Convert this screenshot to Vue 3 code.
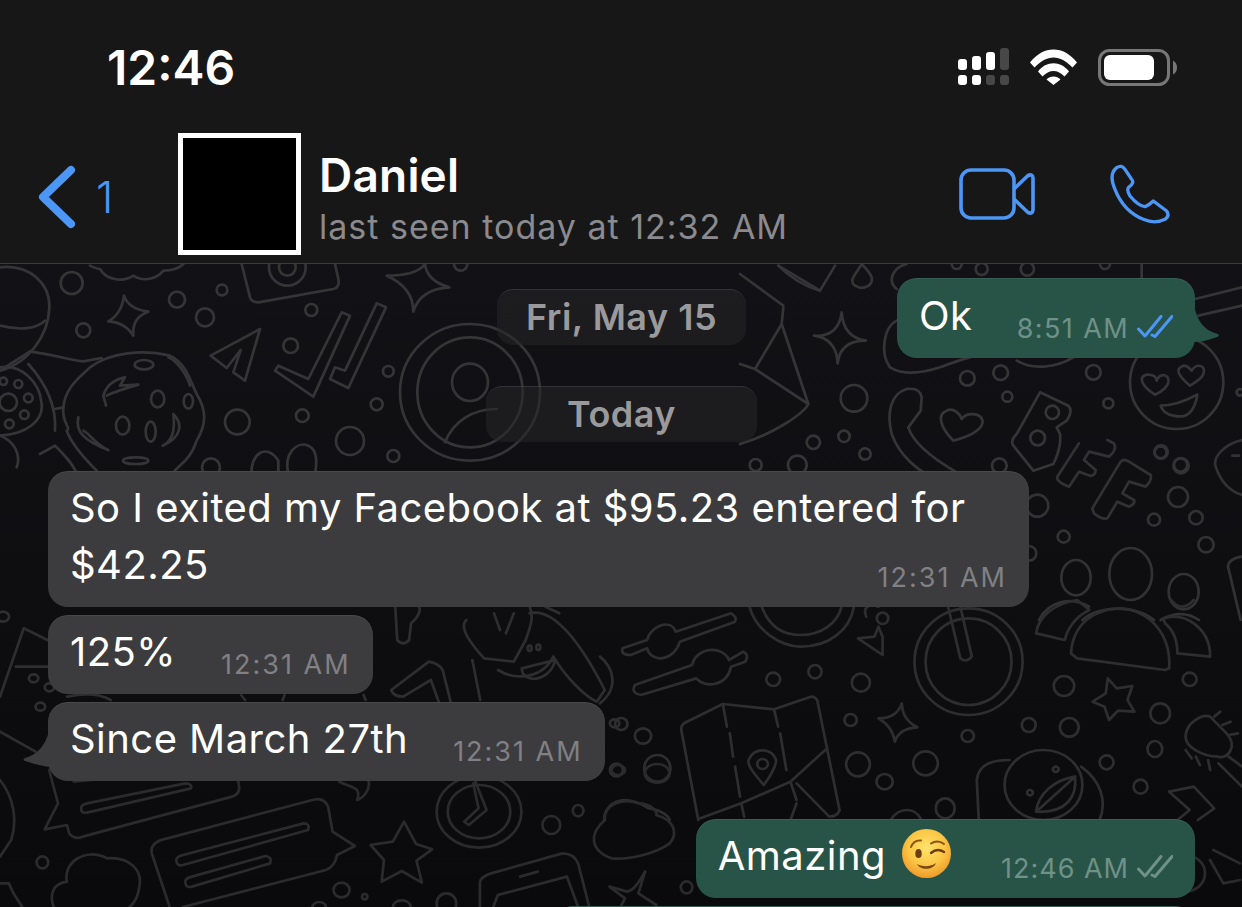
<template>
  <div class="phone">
    <header class="top">
      <div class="status">
        <span class="clock">12:46</span>
        <div class="status-icons">
          <svg class="signal" width="51" height="37" viewBox="0 0 51 37">
            <rect v-for="b in signalBars" :key="b.x + '-' + b.y" :x="b.x" :y="b.y" width="9" :height="b.h" rx="3" :fill="b.on ? '#fff' : '#474747'" />
          </svg>
          <svg class="wifi" width="47" height="36" viewBox="0 0 47 36" fill="#fff">
            <path d="M0 13.5C13-4 34-4 47 13.5L42.5 18.5C30 5 17 5 4.5 18.5Z" />
            <path d="M8 22.5C16 11.5 31 11.5 39 22.5L34.5 27.5C28 20 19 20 12.5 27.5Z" />
            <path d="M16.5 30.5C20 26.5 27 26.5 30.5 30.5L23.5 36Z" />
          </svg>
          <svg class="battery" width="79" height="37" viewBox="0 0 79 37">
            <rect x="1.5" y="1.5" width="69" height="34" rx="10" fill="none" stroke="#777" stroke-width="3" />
            <rect x="6" y="6" width="50" height="25" rx="6" fill="#fff" />
            <path d="M75 11.5C78 13 79 16 79 18.5C79 21 78 24 75 25.5Z" fill="#777" />
          </svg>
        </div>
      </div>
      <nav class="nav">
        <svg class="chevron" width="38" height="64" viewBox="0 0 38 64">
          <path d="M33 5L5 32L33 59" fill="none" stroke="#4c97f6" stroke-width="8" stroke-linecap="round" stroke-linejoin="round" />
        </svg>
        <span class="back-count">1</span>
        <div class="avatar"></div>
        <div class="who">
          <div class="name">Daniel</div>
          <div class="seen">last seen today at 12:32 AM</div>
        </div>
        <svg class="video" width="76" height="52" viewBox="0 0 76 52" fill="none" stroke="#4c97f6" stroke-width="3.6" stroke-linejoin="round">
          <rect x="2" y="2" width="53" height="48" rx="10" />
          <path d="M55 21L69 7.5Q73.5 5.5 74 10V42Q73.5 46.5 69 44.5L55 31" />
        </svg>
        <svg class="call" width="60" height="60" viewBox="570 435 180 178" fill="none" stroke="#4c97f6" stroke-width="10" stroke-linejoin="round">
          <path d="M590 445Q605 435 615 450L635 480Q645 490 625 505Q620 515 630 530Q655 560 675 562Q690 555 700 545L740 575Q750 590 735 600Q705 615 670 600Q610 575 585 510Q565 465 590 445Z" />
        </svg>
      </nav>
    </header>

    <main class="chat">
      <svg class="wall" width="1242" height="643" viewBox="0 264 1242 643" fill="none" stroke-linecap="round" stroke-linejoin="round">
        <g v-for="g in doodles" :key="g.id" :transform="`translate(${g.x} ${g.y}) scale(${1 / g.sx} ${1 / g.sy})`" :stroke="g.stroke">
          <path v-for="(d, i) in g.paths" :key="i" :d="d" vector-effect="non-scaling-stroke" stroke-width="2.7" />
          <ellipse v-for="(c, i) in g.rings" :key="'r' + i" :cx="c[0]" :cy="c[1]" :rx="c[2]" :ry="c[3] || c[2]" vector-effect="non-scaling-stroke" stroke-width="2.7" />
        </g>
      </svg>

      <div class="first-row">
        <div class="pill fri">Fri, May 15</div>
        <div class="bubble out ok">
          <span class="text">Ok</span>
          <span class="meta">
            <span class="time">8:51 AM</span>
            <svg class="ticks" width="36" height="24" viewBox="0 0 36 24" fill="none" stroke="#4c97f6" stroke-width="3" stroke-linecap="round" stroke-linejoin="round">
              <path d="M1.5 14L8 21L24 1.5" /><path d="M15 20L18 21.5L35 1.5" />
            </svg>
          </span>
          <svg class="tail tail-r" width="28" height="56" viewBox="0 0 28 56">
            <path d="M0 0C4 24 12 30 25 34Q27 36 24 37C16 40 8 42 0 42Z" fill="#285448" />
          </svg>
        </div>
      </div>

      <div class="pill today">Today</div>

      <div class="bubble in wide">
        <div class="text">So I exited my Facebook at $95.23 entered for</div>
        <div class="last-line">
          <span class="text">$42.25</span>
          <span class="meta"><span class="time">12:31 AM</span></span>
        </div>
      </div>
      <div class="bubble in">
        <span class="text">125%</span>
        <span class="meta"><span class="time">12:31 AM</span></span>
      </div>
      <div class="bubble in since">
        <span class="text">Since March 27th</span>
        <span class="meta"><span class="time">12:31 AM</span></span>
        <svg class="tail tail-l" width="28" height="50" viewBox="0 0 28 50">
          <path d="M28 0C24 20 14 28 3 31Q0 33 3 34C12 37 20 39 28 40Z" fill="#3c3c3e" />
        </svg>
      </div>

      <div class="bubble out amazing">
        <span class="text">Amazing</span>
        <svg class="wink" width="49" height="49" viewBox="0 0 49 49">
          <defs>
            <radialGradient id="face" cx="50%" cy="38%" r="62%">
              <stop offset="0" stop-color="#ffe46b" />
              <stop offset=".6" stop-color="#fbc544" />
              <stop offset="1" stop-color="#ef9a2a" />
            </radialGradient>
          </defs>
          <circle cx="24.5" cy="24.5" r="24.5" fill="url(#face)" />
          <ellipse cx="16.5" cy="24.5" rx="3.2" ry="4.6" fill="#6b3d10" />
          <path d="M9 18C11 13 15 11 19 11.5" fill="none" stroke="#8a5414" stroke-width="2" stroke-linecap="round" />
          <path d="M29 14.5C33 12 38 12 42 15" fill="none" stroke="#8a5414" stroke-width="2" stroke-linecap="round" />
          <path d="M29 24C33 20.5 38 20.5 42 23" fill="none" stroke="#6b3d10" stroke-width="2.4" stroke-linecap="round" />
          <path d="M15 35C20 38 29 38 34 34C32 41 18 42 15 35Z" fill="#7b4612" />
        </svg>
        <span class="meta">
          <span class="time">12:46 AM</span>
          <svg class="ticks" width="36" height="24" viewBox="0 0 36 24" fill="none" stroke="#6f9187" stroke-width="3" stroke-linecap="round" stroke-linejoin="round">
            <path d="M1.5 14L8 21L24 1.5" /><path d="M15 20L18 21.5L35 1.5" />
          </svg>
        </span>
      </div>
      <div class="bubble out next"></div>
    </main>
  </div>
</template>

<script setup>
const signalBars = [
  { x: 0, y: 11, h: 11, on: true }, { x: 14, y: 8, h: 14, on: true },
  { x: 28, y: 4, h: 18, on: true }, { x: 42, y: 0, h: 22, on: false },
  { x: 0, y: 27, h: 10, on: true }, { x: 14, y: 27, h: 10, on: true },
  { x: 28, y: 27, h: 10, on: false }, { x: 42, y: 27, h: 10, on: false },
]

// doodle wallpaper, each group traced in its own crop coordinates
const doodles = [
  {
    id: 'topleft', x: 0, y: 264, sx: 3, sy: 3, stroke: '#353537',
    rings: [[215, 57, 33], [531, 107, 24], [666, 78, 16], [250, 199, 21], [615, 160, 27], [934, 138, 18], [872, 245, 22], [1165, 322, 16], [1130, 421, 18], [907, 455, 19], [712, 474, 37], [1050, 531, 42], [1180, 576, 18], [1382, 0, 20], [633, 610, 27], [862, 10, 55], [862, 10, 25], [25, 415, 26], [10, 352, 11], [55, 360, 12], [85, 402, 13], [73, 452, 13], [28, 480, 13], [1410, 385, 210, 205], [1410, 385, 158, 165], [1410, 355, 54, 56], [432, 302, 28, 14], [473, 405, 20, 25], [565, 412, 14, 22], [368, 485, 20, 27], [452, 503, 15, 30], [407, 590, 38, 10]],
    paths: [
      'M0 10C90 0 150 60 148 130C145 220 80 300 0 320', 'M0 185C60 200 110 195 135 170',
      'M270 5C290 15 300 15 300 15C320 50 370 55 400 35C430 55 470 45 490 20C520 20 540 10 550 0',
      'M725 0L750 100Q755 115 775 115L1000 75Q1020 70 1015 45L1005 0',
      'M372 95Q385 135 445 143Q395 160 400 215Q375 175 325 172Q365 150 372 95Z',
      'M1160 35Q1250 35 1275 0Q1280 50 1348 70Q1260 75 1240 143Q1240 70 1160 35Z',
      'M780 195L632 275L680 312L722 258L700 325L735 350Z',
      'M825 320L940 398L1050 155L1025 145L925 345L835 305Z', 'M990 345L1045 372L1158 130L1130 118L1035 320L1005 310Z',
      'M190 430C195 370 240 340 270 310C330 265 430 255 510 275C560 300 570 350 590 390C620 440 620 480 590 530C570 590 540 600 520 625',
      'M190 430C185 480 215 490 200 500C215 540 250 580 290 620', 'M90 262C150 270 220 290 250 292L305 282', 'M90 262L0 320',
      'M85 300C130 350 170 420 165 500', 'M165 435L190 430', 'M120 570L165 545C190 570 220 600 230 630',
      'M318 425L310 395C320 360 350 345 375 340L360 365L415 362C370 375 340 385 320 395', 'M235 460C225 500 250 530 325 558C290 545 270 510 250 500',
      'M520 450C550 480 545 520 488 545C520 530 525 490 520 450', 'M505 280C530 290 560 330 570 365',
      'M1335 535C1360 470 1420 435 1490 435', 'M0 310C60 300 120 350 125 420C130 470 80 510 0 515', 'M0 515C40 530 65 570 50 610',
      'M755 630C750 570 800 535 835 590V630', 'M865 630C850 570 890 530 925 545C955 560 950 600 945 630',
    ],
  },
  {
    id: 'topright', x: 740, y: 264, sx: 3, sy: 3, stroke: '#353537',
    rings: [[342, 403, 40], [220, 535, 20], [312, 517, 17], [375, 570, 17], [47, 603, 18], [172, 603, 28], [682, 343, 22], [782, 326, 22], [802, 398, 15], [1060, 325, 22], [1105, 418, 15], [1262, 565, 18], [1322, 603, 20], [778, 605, 22], [725, 15, 18], [862, 15, 20], [650, 0, 15], [1095, 0, 15], [1310, 355, 140], [937, 445, 20], [893, 522, 22], [1500, 385, 10]],
    paths: [
      'M0 300L45 315L205 420C190 450 100 510 0 540', 'M130 130L125 180L205 420', 'M125 180L45 315', 'M0 30L130 125',
      'M115 5L240 80L285 5', 'M115 5Q170 60 240 80',
      'M365 0C345 35 325 50 345 65C370 80 400 65 395 40C390 25 375 10 365 0Z',
      'M305 145Q310 220 378 230Q300 230 293 298Q290 225 222 215Q295 220 305 145Z',
      'M470 170C430 190 420 270 450 310C500 340 570 320 600 310C640 295 670 285 690 280', 'M830 290C880 320 950 310 1000 280',
      'M500 375C450 390 440 450 455 510C480 580 540 620 560 630', 'M500 375Q540 370 545 400L542 440L505 490C520 540 590 590 650 625',
      'M640 530C600 490 590 450 620 440C640 430 660 450 665 465C680 445 720 445 728 470C730 500 680 520 640 530Z',
      'M900 385L985 425Q1000 440 980 470L950 490L960 510Q965 550 940 600L880 620L820 545Q810 530 830 510Z',
      'M1245 392C1210 370 1190 340 1220 332C1240 330 1250 340 1250 350C1260 325 1290 330 1285 355C1280 375 1260 385 1245 392Z',
      'M1350 365C1320 340 1300 315 1330 305C1345 305 1350 315 1355 320C1370 295 1400 305 1390 330C1385 345 1365 355 1350 365Z',
      'M1262 425Q1310 425 1372 392Q1360 470 1300 455Q1270 450 1262 425Z',
      'M1365 105L1506 70', 'M1375 155L1506 125', 'M1205 0V45', 'M500 0C460 10 440 50 470 75',
    ],
  },
  {
    id: 'rightmid', x: 1029, y: 440, sx: 3, sy: 3, stroke: '#323234',
    rings: [[396, 36, 20], [456, 77, 23], [447, 171, 30], [375, 239, 18], [501, 233, 20], [531, 314, 23], [104, 290, 18], [25, 197, 33], [0, 340, 22], [141, 413, 44, 53], [305, 402, 64, 78], [464, 455, 45, 53]],
    paths: [
      'M85 110L150 10', 'M85 110Q80 125 120 140L150 95L185 108Q200 105 200 90L165 60L180 35L240 50Q265 30 255 10L235 0',
      'M190 205L275 65Q285 55 300 65L365 105Q370 120 350 140L300 125L280 160L315 180Q320 190 300 200L265 185L235 235Q220 240 195 220Z',
      'M30 540C60 480 130 470 180 500', 'M160 540C210 495 320 495 375 540', 'M395 540C440 515 480 520 510 540',
      'M639 350Q600 355 597 380L635 540', 'M639 0C590 10 550 50 560 80C570 110 590 150 639 165', 'M610 47L630 47',
    ],
  },
  {
    id: 'midleft', x: 0, y: 600, sx: 2.53, sy: 3, stroke: '#2e2e30',
    rings: [[85, 235, 12], [125, 262, 12], [102, 320, 12], [8, 50, 15], [1340, 145, 5, 8], [1362, 142, 5, 8], [1555, 370, 12]],
    paths: [
      'M60 85L0 290', 'M60 85L120 120', 'M40 200L125 200', 'M0 395L90 455',
      'M1000 20L1005 120Q1020 140 1035 120L1040 70C1060 50 1065 30 1060 20',
      'M1180 60C1160 80 1190 130 1225 175L1300 185L1330 120C1345 70 1350 50 1340 20',
      'M1340 40C1400 20 1470 130 1530 270L1510 305C1480 290 1430 230 1400 170', 'M1400 170C1370 240 1300 240 1260 210',
      'M1320 205L1405 180C1390 250 1320 250 1320 205Z', 'M1250 40L1265 90', 'M1300 40L1280 100', 'M1380 20L1415 40',
      'M1195 180L1215 300', 'M990 270L1085 185Q1110 190 1120 210L1140 305', 'M1020 290L1090 240L1110 305', 'M990 270Q995 290 1020 290',
      'M170 290C210 280 250 280 280 300', 'M610 285L620 300', 'M720 285L715 300', 'M920 285L925 300',
    ],
  },
  {
    id: 'midright', x: 600, y: 600, sx: 2.442, sy: 3, stroke: '#2e2e30',
    rings: [[423, 238, 17, 20], [525, 215, 16, 20], [637, 248, 22, 27], [1133, 258, 25, 30], [1440, 238, 17, 20], [1368, 340, 24, 30], [1047, 375, 17, 21], [1146, 382, 23, 28], [898, 408, 15, 18], [612, 360, 15, 18], [52, 372, 15, 18], [105, 408, 20, 23], [40, 510, 16, 19], [140, 505, 32, 40], [630, 493, 29, 36], [795, 490, 30, 36], [695, 545, 20, 23], [1355, 447, 18, 24], [1237, 487, 17, 21], [1320, 560, 17, 21], [843, 625, 23, 30], [690, 55, 14, 17], [900, 185, 132, 160], [900, 185, 105, 130], [397, 492, 13, 15], [1083, 555, 95, 105], [1113, 508, 7, 8], [1050, 578, 7, 8]],
    paths: [
      'M365 20C380 90 440 140 490 140C560 140 610 90 620 20', 'M395 20C410 70 440 105 490 105C540 105 580 70 590 20',
      'M55 145L115 120C120 85 170 50 185 95L320 40Q335 50 330 65L195 125C180 185 125 190 115 145L75 165Q50 165 55 145Z',
      'M85 255L225 195C235 140 300 135 315 180L350 155Q365 165 355 185L320 200C310 260 255 265 235 235L100 285Q75 280 85 255Z',
      'M850 20L880 175Q895 190 908 170L880 20', 'M680 80L670 110L630 115L690 165L690 110Z', 'M650 50C640 20 660 10 680 20',
      'M1150 160C1155 70 1210 25 1270 25C1340 30 1395 100 1390 205L1380 210L1165 175Z',
      'M1065 100C1070 50 1110 10 1165 0L1195 30C1160 50 1140 90 1135 120Z', 'M1375 55C1430 35 1490 85 1490 170L1410 160C1410 120 1400 90 1380 70Z',
      'M1395 0Q1420 40 1450 0',
      'M1240 235L1262 265L1300 258L1288 300L1305 335L1265 332L1243 360L1232 320L1203 305L1235 280Z',
      'M737 310Q738 360 775 382Q730 385 720 425Q715 380 680 355Q725 355 737 310Z',
      'M205 370L300 312L425 328L515 290Q530 290 532 310L585 630Q580 650 560 650L480 550', 'M205 370Q195 380 200 400L240 660',
      'M245 655L345 610L465 545L550 450', 'M300 312L310 380', 'M317 400L325 470', 'M330 500L342 590', 'M425 328L435 380', 'M440 400L455 510',
      'M400 555C375 520 355 490 365 475C380 440 420 445 430 480C430 500 415 530 400 555Z', 'M345 610L352 650', 'M465 545L480 600', 'M465 660L480 610',
      'M0 170C30 200 50 260 0 310', 'M1000 480C960 480 925 490 920 540L925 660', 'M1175 500C1220 540 1240 600 1220 660',
      'M1065 635C1070 580 1110 540 1160 530C1165 590 1140 640 1065 635Z', 'M1065 635L1160 530',
      'M710 660C730 620 770 620 785 660',
      'M1430 410C1430 370 1470 340 1490 350L1530 400C1560 440 1530 480 1510 470C1470 470 1430 440 1430 410Z',
      'M1500 350L1515 335', 'M1520 375L1540 365', 'M1535 405L1558 400', 'M1430 450L1445 475', 'M1455 470L1465 495', 'M1485 480L1490 510',
      'M1510 490L1568 560', 'M1535 470L1568 500', 'M1390 575L1450 560L1500 625L1460 660', 'M1390 575L1440 630L1410 660',
      'M10 660C10 630 30 600 60 600C90 600 110 620 120 625C150 630 170 650 170 660',
    ],
  },
  {
    id: 'bottom', x: 0, y: 770, sx: 2.24, sy: 3, stroke: '#2b2b2d',
    rings: [[1235, 165, 20, 27], [1295, 122, 12, 17], [1385, 0, 15], [1472, 10, 28], [95, 277, 13, 18], [765, 360, 18, 22], [817, 380, 6, 8], [1538, 352, 13, 18], [715, 411, 15], [900, 411, 20], [1000, 400, 22, 30], [1073, 125, 95, 108], [1073, 125, 70, 80]],
    paths: [
      'M110 0L130 100L100 178L150 165L155 190Q165 210 185 200L520 80Q540 70 535 45L530 0',
      'M195 100L415 40Q430 40 428 55L195 128Q180 130 182 115Q180 105 195 100Z', 'M165 35L420 0',
      'M375 205L700 90Q725 80 735 110L745 185L795 228L755 255Q750 290 730 300L410 411', 'M375 205Q335 215 340 250L380 411',
      'M410 255L680 160Q695 160 690 180L410 285Q395 290 395 270Q395 260 410 255Z',
      'M430 320L595 258Q610 260 605 280L430 350Q415 355 415 335Q415 325 430 320Z',
      'M905 155L932 222L968 238L933 272L945 338L900 303L855 335L860 270L830 225L880 215Z',
      'M1065 35L1090 120L1050 165L1040 155L1072 115L1060 40',
      'M1370 265C1320 240 1320 190 1355 150C1350 110 1390 80 1430 100C1460 100 1475 130 1470 135C1510 150 1520 190 1500 220C1470 250 1410 270 1370 265Z',
      'M120 411C110 370 120 340 150 335C140 280 190 230 240 265C290 260 320 300 312 350C310 380 300 400 290 411',
      'M1075 411L1075 340Q1075 320 1100 310L1260 250Q1285 250 1295 280L1320 411', 'M1105 411L1115 375L1270 320L1295 411', 'M1165 320L1205 305',
      'M1445 305L1430 370L1470 405', 'M1445 305C1430 340 1420 360 1405 365L1365 350L1400 385L1390 411',
      'M0 30C30 80 40 150 25 210L0 260', 'M0 340L20 340L30 370L50 411', 'M760 35C790 55 810 50 800 90C820 80 830 50 825 30',
    ],
  },
  {
    id: 'lowright', x: 1160, y: 850, sx: 3, sy: 3, stroke: '#2b2b2d',
    rings: [[75, 70, 60, 55], [75, 15, 14, 18], [90, 0, 6]],
    paths: ['M160 0L240 40', 'M150 30L190 100L240 90'],
  },
]
</script>

<style scoped>
.phone {
  width: 1242px;
  height: 907px;
  overflow: hidden;
  display: flex;
  flex-direction: column;
  background: #171717;
  font-family: Inter, "Liberation Sans", sans-serif;
  color: #fff;
}

.top {
  height: 264px;
  flex: none;
  box-sizing: border-box;
  border-bottom: 1px solid #3a3a3c;
}
.status {
  height: 133px;
  display: flex;
  align-items: flex-start;
  justify-content: space-between;
  padding: 0 65px 0 107px;
}
.clock {
  font-size: 48px;
  font-weight: 600;
  line-height: 57px;
  margin-top: 39px;
}
.status-icons {
  display: flex;
  align-items: flex-start;
  margin-top: 48px;
  gap: 21px;
}
.wifi { margin-top: 1px; }
.battery { margin-top: 1px; }

.nav {
  display: flex;
  align-items: center;
  height: 122px;
  padding-left: 38px;
}
.chevron { margin-top: 6px; }
.back-count {
  font-size: 44px;
  font-weight: 300;
  color: #4c97f6;
  margin-left: 20px;
  width: 82px;
  margin-top: 6px;
}
.avatar {
  width: 123px;
  height: 122px;
  box-sizing: border-box;
  background: #000;
  border: 5px solid #fff;
  flex: none;
}
.who {
  flex: 1;
  margin: 10px 0 0 18px;
}
.name {
  font-size: 46px;
  font-weight: 600;
  line-height: 50px;
  letter-spacing: 0.2px;
}
.seen {
  font-size: 34px;
  line-height: 42px;
  margin-top: 6px;
  color: #8a8a8f;
  letter-spacing: 1px;
}
.video { margin-right: 75px; }
.call { margin-right: 72px; }

.chat {
  position: relative;
  flex: 1;
  min-height: 0;
  display: flex;
  flex-direction: column;
  padding: 14px 47px 0 48px;
  background: linear-gradient(#121216, #0a0a0c);
}
.wall {
  position: absolute;
  left: 0;
  top: 0;
}

.first-row {
  position: relative;
  flex: none;
  display: grid;
  grid-template-columns: 1fr;
  justify-items: end;
}
.first-row > * { grid-area: 1 / 1; }

.pill {
  position: relative;
  flex: none;
  box-sizing: border-box;
  height: 56px;
  border-radius: 16px;
  background: rgba(38, 38, 40, 0.55);
  border-top: 1px solid rgba(255, 255, 255, 0.1);
  color: #9a9a9d;
  font-size: 36px;
  font-weight: 600;
  letter-spacing: 0.5px;
  line-height: 54px;
  text-align: center;
}
.fri {
  width: 249px;
  margin: 11px 449px 0 0;
  align-self: start;
}
.today {
  width: 271px;
  align-self: center;
  margin: 28px 0 29px;
}

.bubble {
  position: relative;
  flex: none;
  box-sizing: border-box;
  display: flex;
  align-items: flex-end;
  min-height: 79px;
  padding: 8px 22px 14px 22px;
  margin-bottom: 8px;
  border-radius: 20px;
  font-size: 40px;
  letter-spacing: 0.45px;
  line-height: 57px;
  align-self: flex-start;
}
.bubble.in {
  background: #3c3c3e;
  box-shadow: inset 0 1px 0 rgba(255, 255, 255, 0.07);
}
.bubble.out {
  background: #285448;
  align-self: flex-end;
  box-shadow: inset 0 1px 0 rgba(255, 255, 255, 0.07);
}
.meta {
  display: flex;
  align-items: center;
  flex: none;
  margin-left: 45px;
  line-height: 30px;
}
.time {
  font-size: 27px;
  color: #808085;
  letter-spacing: 2px;
}
.out .time { color: #6f9187; }
.ticks {
  margin-left: 8px;
  margin-top: -4px;
}
.ok {
  width: 298px;
  min-height: 80px;
  justify-content: space-between;
  margin-bottom: 0;
}
.ok .meta { margin-left: 0; }
.ok .time { letter-spacing: 1.4px; }
.wide {
  width: 981px;
  flex-direction: column;
  align-items: stretch;
}
.last-line {
  display: flex;
  align-items: flex-end;
  justify-content: space-between;
}
.since { margin-bottom: 38px; }
.wink {
  margin: 0 0 5px 16px;
  align-self: center;
}
.amazing .meta { margin-left: 50px; }
.amazing .time { letter-spacing: 1px; }
.next {
  width: 642px;
  height: 80px;
}
.tail { position: absolute; }
.tail-r {
  left: 100%;
  top: 22px;
  margin-left: -2px;
}
.tail-l {
  right: 100%;
  top: 25px;
  margin-right: -2px;
}
</style>
